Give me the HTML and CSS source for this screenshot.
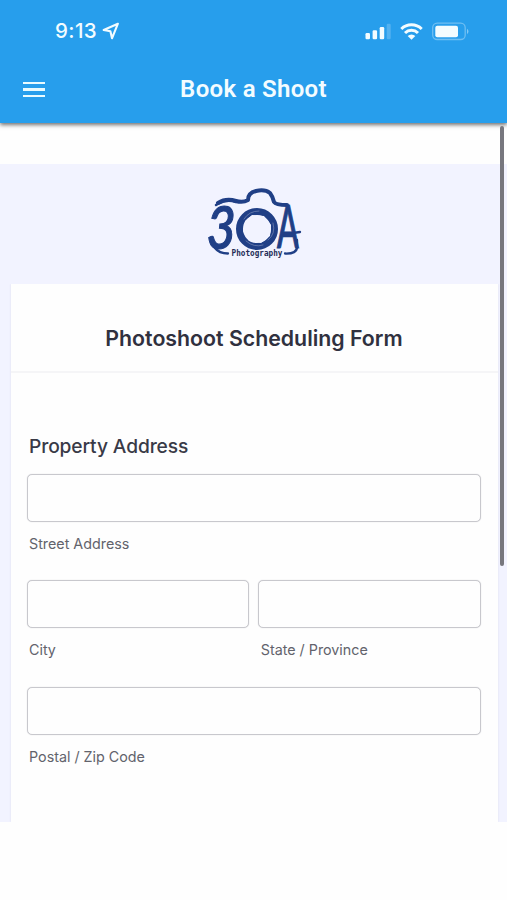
FILE: index.html
```html
<!DOCTYPE html>
<html lang="en">
<head>
<meta charset="utf-8">
<meta name="viewport" content="width=device-width, initial-scale=1">
<title>Book a Shoot</title>
<link rel="stylesheet" href="styles.css">
</head>
<body>
<header class="header">
  <div class="status">
    <span class="time">9:13</span>
    <svg class="location" width="18" height="18" viewBox="0 0 18 18"><path d="M15.9 1.7 1.7 8l6.7 1.3 1.6 7z" fill="none" stroke="currentColor" stroke-width="2.1" stroke-linejoin="round"/></svg>
    <svg class="indicators" width="106" height="20" viewBox="0 0 106 20">
      <g fill="currentColor">
        <rect x="1.5" y="12" width="4.5" height="6.3" rx="1.2"/>
        <rect x="8.6" y="9.2" width="4.5" height="9.1" rx="1.2"/>
        <rect x="15.7" y="6" width="4.5" height="12.3" rx="1.2"/>
        <rect x="22.7" y="2.8" width="4" height="15.5" rx="1.2" opacity=".22"/>
        <path d="M47.5 18.8 43.7 15a5.4 5.4 0 0 1 7.6 0z"/>
        <rect x="71.3" y="4.7" width="22.7" height="11.6" rx="2"/>
        <path d="M103 7.8q3 2.7 0 5.4z" opacity=".45"/>
      </g>
      <g fill="none" stroke="currentColor">
        <path d="M37.3 8a14.5 14.5 0 0 1 20.4 0M41 12a9.3 9.3 0 0 1 13 0" stroke-width="3"/>
        <rect x="68.7" y="2.2" width="32.5" height="16.3" rx="4.5" stroke-width="1.3" opacity=".35"/>
      </g>
    </svg>
  </div>
  <div class="toolbar">
    <button class="menu" aria-label="Menu"><i></i><i></i><i></i></button>
    <h1 class="title">Book a Shoot</h1>
  </div>
</header>
<main class="page">
  <div class="logo">
    <svg width="120" height="90" viewBox="0 0 120 90">
      <g fill="none" stroke="#203f86" stroke-linecap="round" stroke-linejoin="round">
        <path d="M23 23q8-5 18-2 7 2 12-1 0-7 8-9 9-2 14 2 3 4 4 9 2 3 13 3" stroke-width="4"/>
        <path d="M21 25q10-7 20-3" stroke-width="2.5"/>
        <circle cx="62" cy="49" r="17.5" stroke-width="7"/>
        <path d="M49 39q5-8 15-8M78 43q3 11-5 17M51 61q8 7 17 4" stroke="#8997bf" stroke-width=".6"/>
        <path d="M20 68q4 5.500 13 5.500M102 60v7q0 7-12 6.500M98 53l7-1" stroke-width="2.300"/>
      </g>
      <path d="m57 35 12 1 7 9-1 11-9 7-12-2-6-10 2-10z" fill="#f2f3ff"/>
      <g fill="#203f86" stroke="#203f86" stroke-width="1.2">
        <text class="mark slant" transform="translate(11.500 69) scale(.86 1)">3</text>
        <text class="mark" transform="translate(82 68) scale(.54 1)">A</text>
      </g>
      <text class="wordmark" x="36.5" y="76" textLength="51" lengthAdjust="spacingAndGlyphs">Photography</text>
    </svg>
  </div>
  <form class="card">
    <h2 class="form-title">Photoshoot Scheduling Form</h2>
    <fieldset class="fields">
      <legend class="legend">Property Address</legend>
      <label class="field wide"><input type="text"><span>Street Address</span></label>
      <label class="field"><input type="text"><span>City</span></label>
      <label class="field"><input type="text"><span>State / Province</span></label>
      <label class="field wide"><input type="text"><span>Postal / Zip Code</span></label>
    </fieldset>
  </form>
</main>
<div class="scrollbar"></div>
</body>
</html>
```
FILE: styles.css
```css
* { box-sizing: border-box; }
body { margin: 0; height: 900px; overflow: hidden; background: #fefefe; font-family: Inter, "Liberation Sans", sans-serif; }
.header { position: relative; height: 122.5px; background: #279eec; color: #f3fcff; box-shadow: 0 2px 4px rgba(0,0,0,.55); }
.status { display: flex; align-items: center; height: 60px; padding: 1px 37px 0 55px; }
.time { font-size: 20.5px; font-weight: 500; letter-spacing: .4px; }
.location { margin-left: 5px; }
.indicators { margin-left: auto; }
.toolbar { display: grid; grid-template-columns: 60px 1fr 60px; align-items: center; height: 60px; }
.menu { display: grid; gap: 4px; width: 22px; margin: -1px 0 0 23px; padding: 0; border: 0; background: none; }
.menu i { height: 2.5px; background: #e9fbff; }
.title { margin: -2px 0 0; text-align: center; font: 600 24px/28px Roboto, sans-serif; letter-spacing: .3px; }
.page { height: 658px; margin-top: 41.5px; background: #f2f3ff; }
.logo { display: flex; justify-content: center; height: 120px; padding: 16px 0 0 3px; }
.mark { font: 500 59px Lato, sans-serif; }
.slant { font-style: italic; }
.wordmark { font: 700 8.3px "DejaVu Sans Mono", monospace; fill: #252d57; }
.card { height: 538px; margin: 0 9.5px 0 10.5px; background: #fefefe; box-shadow: 0 0 2px #dcdded; clip-path: inset(0 -3px); }
.form-title { height: 88.5px; margin: 0; padding-top: 40px; border-bottom: 2px solid #f5f5f7; text-align: center; font-size: 21.3px; line-height: 28px; font-weight: 600; color: #30313f; }
.fields { display: grid; grid-template-columns: 1fr 1fr; gap: 0 9px; margin: 0; padding: 58px 16.5px 0 16px; border: 0; }
.legend { float: left; grid-column: 1 / -1; height: 43.3px; padding: 0 0 0 2.5px; font-size: 19.2px; line-height: 30px; font-weight: 500; letter-spacing: -.12px; color: #393a47; }
.field { display: block; height: 106.4px; }
.wide { grid-column: 1 / -1; }
.field input { display: block; width: 100%; height: 48px; margin: 0; border: 1.5px solid #c8c8cd; border-radius: 5px; background: #fefefe; outline: 0; box-shadow: 0 0 1px #c8c8cd; }
.field span { display: block; padding: 12px 0 0 2.5px; font-size: 14.3px; line-height: 20px; color: #62636c; }
.scrollbar { position: absolute; top: 126px; right: 3px; width: 4px; height: 440px; border-radius: 2px; background: #77777e; }
```
